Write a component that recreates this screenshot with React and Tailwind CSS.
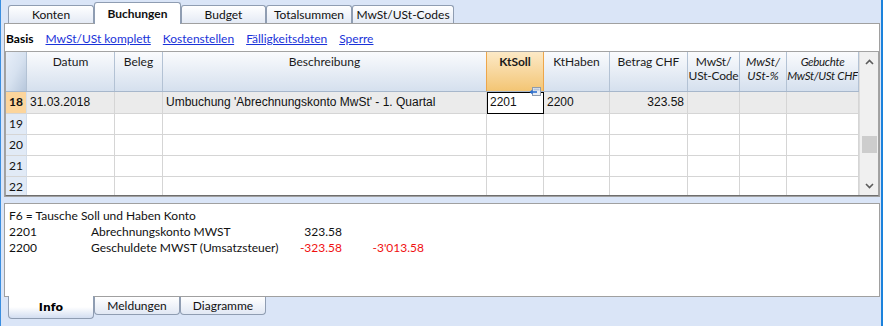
import React from "react";

const bodyW = [
  "w-[88px]",
  "w-[48px]",
  "w-[324px]",
  "w-[57px]",
  "w-[66px]",
  "w-[78px]",
  "w-[52px]",
  "w-[47px]",
  "w-[72px]",
];

const rows = [
  {
    n: "18",
    sel: true,
    h: "h-[22px]",
    cells: [
      "31.03.2018",
      "",
      "Umbuchung 'Abrechnungskonto MwSt' - 1. Quartal",
      "2201",
      "2200",
      "323.58",
      "",
      "",
      "",
    ],
  },
  { n: "19", h: "h-[21px]", cells: [] },
  { n: "20", h: "h-[21px]", cells: [] },
  { n: "21", h: "h-[21px]", cells: [] },
  { n: "22", h: "h-[18px]", last: true, cells: [] },
];

function Chevron({ up }) {
  return (
    <svg width="9" height="6" viewBox="0 0 9 6" className="block">
      {up ? (
        <path d="M1 5 L4.5 1.5 L8 5" fill="none" stroke="#5c5c5c" strokeWidth="1.6" />
      ) : (
        <path d="M1 1 L4.5 4.5 L8 1" fill="none" stroke="#5c5c5c" strokeWidth="1.6" />
      )}
    </svg>
  );
}

function CellIcon() {
  return (
    <svg width="12" height="10" viewBox="0 0 12 10" className="block">
      <rect x="3.5" y="0.5" width="8" height="8" fill="#e9edf3" stroke="#8e9bad" />
      <rect x="4.5" y="1.5" width="6" height="2" fill="#b9c5d6" />
      <path d="M8 5 H2.5" stroke="#2a6fd0" strokeWidth="1.6" />
      <path d="M0.5 5 L3.5 2.5 L3.5 7.5 Z" fill="#2a6fd0" />
    </svg>
  );
}

function HeaderRow() {
  const base =
    "h-full shrink-0 border-r border-[#b3c2d4] bg-linear-to-b from-[#fafbfd] to-[#d5e0ee] text-center leading-[14px] pt-[3px] overflow-hidden whitespace-nowrap text-[#1a1a1a]";
  return (
    <div className="flex h-[40px] border-b border-[#a7b7cb] shrink-0">
      <div className="w-[21px] h-full shrink-0 border-r border-[#b3c2d4] bg-linear-to-br from-[#e8eff9] via-[#d7e2f0] to-[#b7c7dc]" />
      <div className={`w-[88px] ${base}`}>Datum</div>
      <div className={`w-[48px] ${base}`}>Beleg</div>
      <div className="w-[324px] h-full shrink-0 border-r border-[#eda64a] bg-linear-to-b from-[#fafbfd] to-[#d5e0ee] text-center leading-[14px] pt-[3px] text-[#1a1a1a]">
        Beschreibung
      </div>
      <div className="w-[57px] h-full shrink-0 border-r border-[#eda64a] bg-linear-to-b from-[#fce9c6] to-[#f3c573] text-center leading-[14px] pt-[3px] font-bold text-[#1a1a1a]">
        KtSoll
      </div>
      <div className={`w-[66px] ${base}`}>KtHaben</div>
      <div className={`w-[78px] ${base}`}>Betrag CHF</div>
      <div className={`w-[52px] ${base} tracking-[-0.2px]`}>
        <div>MwSt/</div>
        <div>USt-Code</div>
      </div>
      <div className={`w-[47px] ${base} italic`}>
        <div>MwSt/</div>
        <div>USt-%</div>
      </div>
      <div className={`w-[72px] ${base} italic text-[11.5px] tracking-[-0.3px]`}>
        <div>Gebuchte</div>
        <div>MwSt/USt CHF</div>
      </div>
    </div>
  );
}

function BodyRow({ row }) {
  const rowBg = row.sel ? "bg-[#ebebeb]" : "bg-white";
  const bb = row.last ? "" : "border-b";
  return (
    <div className={`flex ${row.h} shrink-0`}>
      <div
        className={`w-[21px] h-full shrink-0 ${bb} border-r border-[#d5d5d5] border-r-[#d3deec] text-center leading-[20px] font-['Lato',sans-serif] ${
          row.sel ? "bg-[#fcd59c] font-bold" : "bg-[#e1eaf6]"
        }`}
      >
        {row.n}
      </div>
      {bodyW.map((w, i) => {
        const txt = row.cells[i] || "";
        const isSel = row.sel && i === 3;
        return (
          <div
            key={i}
            className={`${w} h-full shrink-0 ${bb} border-r border-[#d5d5d5] ${
              isSel ? "bg-white relative" : rowBg
            } ${i === 5 ? "text-right pr-[3px]" : "pl-[3px]"} font-['Liberation_Sans',Arial,sans-serif] text-[12px] leading-[21px] text-[#111] whitespace-nowrap overflow-visible`}
          >
            {txt}
            {isSel && (
              <>
                <div className="absolute left-0 top-0 -right-px -bottom-px border border-black" />
                <div className="absolute right-[2px] -top-[5px]">
                  <CellIcon />
                </div>
              </>
            )}
          </div>
        );
      })}
    </div>
  );
}

function Scrollbar() {
  return (
    <div className="w-[19px] h-full shrink-0 bg-[#f0f0f0] border-l border-[#dcdcdc] flex flex-col items-center">
      <div className="mt-[7px]">
        <Chevron up />
      </div>
      <div className="mt-[71px] h-[17px] w-[15px] bg-[#cdcdcd]" />
      <div className="mt-[30px]">
        <Chevron />
      </div>
    </div>
  );
}

export default function App() {
  return (
    <div className="w-[883px] h-[326px] overflow-hidden bg-[#dae5f7] border-l border-r-2 border-l-[#3a8ee0] border-r-[#1b82dc] pl-[3px] pr-[1px] flex flex-col font-['Lato','Noto_Sans',sans-serif] text-[12px] text-[#111]">
      {/* top tabs */}
      <div className="h-[23px] flex items-end pl-[4px] shrink-0">
        <div className="w-[86px] h-[18px] border border-b-0 border-[#8f9db2] rounded-t-[3px] bg-linear-to-b from-white to-[#e4eaf5] text-center leading-[16px] pt-[1px]">
          Konten
        </div>
        <div className="relative z-10 -mb-px w-[87px] h-[22px] border border-b-0 border-[#8f9db2] rounded-t-[3px] bg-white text-center leading-[16px] pt-[3px] font-bold">
          Buchungen
        </div>
        <div className="w-[85px] h-[18px] border border-b-0 border-[#8f9db2] rounded-t-[3px] bg-linear-to-b from-white to-[#e4eaf5] text-center leading-[16px] pt-[1px]">
          Budget
        </div>
        <div className="w-[86px] h-[18px] border border-b-0 border-[#8f9db2] rounded-t-[3px] bg-linear-to-b from-white to-[#e4eaf5] text-center leading-[16px] pt-[1px]">
          Totalsummen
        </div>
        <div className="w-[102px] h-[18px] border border-b-0 border-[#8f9db2] rounded-t-[3px] bg-linear-to-b from-white to-[#e4eaf5] text-center leading-[16px] pt-[1px]">
          MwSt/USt-Codes
        </div>
      </div>

      {/* main panel */}
      <div className="bg-white border border-[#a0a0a0] shrink-0 flex flex-col">
        <div className="h-[27px] flex items-start gap-[12px] pt-[7px] pl-[1px] leading-[16px] shrink-0">
          <span className="font-bold text-black">Basis</span>
          <span className="text-[#1a33d9] underline">MwSt/USt komplett</span>
          <span className="text-[#1a33d9] underline">Kostenstellen</span>
          <span className="text-[#1a33d9] underline">Fälligkeitsdaten</span>
          <span className="text-[#1a33d9] underline">Sperre</span>
        </div>
        <div className="h-[145px] border border-[#a3a3a3] border-b-[#6e6e6e] flex shrink-0">
          <div className="w-[853px] h-full flex flex-col shrink-0">
            <HeaderRow />
            {rows.map((r) => (
              <BodyRow key={r.n} row={r} />
            ))}
          </div>
          <Scrollbar />
        </div>
      </div>

      {/* info panel */}
      <div className="mt-[6px] h-[94px] bg-white border border-[#a0a0a0] pl-[4px] pt-[4px] leading-[16px] shrink-0 text-[#111] whitespace-nowrap">
        <div>F6 = Tausche Soll und Haben Konto</div>
        <div className="flex">
          <span className="w-[82px] shrink-0">2201</span>
          <span className="w-[170px] shrink-0">Abrechnungskonto MWST</span>
          <span className="w-[81px] shrink-0 text-right">323.58</span>
        </div>
        <div className="flex">
          <span className="w-[82px] shrink-0">2200</span>
          <span className="w-[170px] shrink-0">Geschuldete MWST (Umsatzsteuer)</span>
          <span className="w-[81px] shrink-0 text-right text-[#f01010]">-323.58</span>
          <span className="w-[82px] shrink-0 text-right text-[#f01010]">-3'013.58</span>
        </div>
      </div>

      {/* bottom tabs */}
      <div className="flex items-start pl-[4px] shrink-0">
        <div className="relative z-10 -mt-px w-[86px] h-[23px] border border-t-0 border-[#8f9db2] rounded-b-[4px] bg-linear-to-b from-white via-white to-[#d3def1] text-center pt-[4px] leading-[16px] font-bold font-['DejaVu_Sans',sans-serif] text-[11px] text-black">
          Info
        </div>
        <div className="w-[86px] h-[18px] border border-t-0 border-[#8f9db2] rounded-b-[4px] bg-linear-to-b from-white to-[#e1e8f4] text-center pt-[1px] leading-[16px]">
          Meldungen
        </div>
        <div className="w-[86px] h-[18px] border border-t-0 border-[#8f9db2] rounded-b-[4px] bg-linear-to-b from-white to-[#e1e8f4] text-center pt-[1px] leading-[16px]">
          Diagramme
        </div>
      </div>
    </div>
  );
}
